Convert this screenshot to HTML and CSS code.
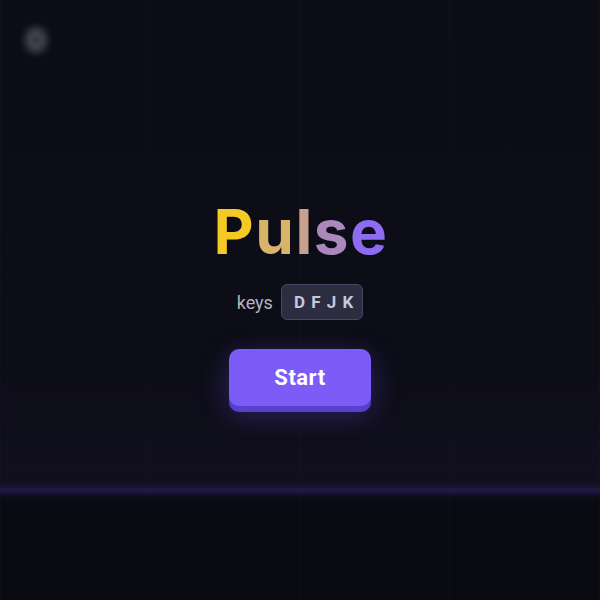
FILE: index.html
```html
<!DOCTYPE html>
<html>
<head>
<meta charset="utf-8">
<link rel="stylesheet" href="styles.css">
</head>
<body>
<div class="stage">
  <div class="lanes">
    <div class="lane"></div>
    <div class="lane"></div>
    <div class="lane"></div>
    <div class="lane"></div>
  </div>
  <div class="hitline"></div>
  <div class="score">0</div>
  <div class="menu">
    <h1 class="title"><span class="c1">P</span><span class="c2">u</span><span class="c3">l</span><span class="c4">s</span><span class="c5">e</span></h1>
    <div class="keys">
      <span class="keys-label">keys</span>
      <span class="keycap">D F J K</span>
    </div>
    <button class="start">Start</button>
  </div>
</div>
</body>
</html>
```
FILE: styles.css
```css
* { box-sizing: border-box; }
html, body { margin: 0; padding: 0; }
body {
  background: #0a0b12;
  font-family: Inter, "Noto Sans", sans-serif;
  width: 600px;
  height: 600px;
  overflow: hidden;
}
.stage {
  position: relative;
  width: 600px;
  height: 600px;
  background: linear-gradient(180deg, #0b0c16 0%, #0d0d18 60%, #110f1e 81%, #0a0b12 82.5%, #0a0b12 100%);
}
.lanes {
  position: absolute;
  inset: 0;
  display: grid;
  grid-template-columns: repeat(4, 1fr);
}
.lane {
  border-right: 1px solid rgba(60, 50, 110, 0.08);
}
.lane:first-child { border-left: 1px solid rgba(60, 50, 110, 0.08); }
.hitline {
  position: absolute;
  left: 0;
  right: 0;
  top: 488px;
  height: 5px;
  background: rgba(36, 26, 72, 0.85);
  box-shadow: 0 0 7px 2px rgba(55, 38, 110, 0.4);
}
.score {
  position: absolute;
  left: 26px;
  top: 22px;
  font-size: 30px;
  font-weight: 700;
  color: #9a9aa8;
  filter: blur(4px);
  opacity: 0.8;
}
.menu {
  position: absolute;
  inset: 0;
  display: flex;
  flex-direction: column;
  align-items: center;
  padding-top: 194px;
}
.title {
  margin: 0;
  font-size: 62px;
  font-weight: 700;
  letter-spacing: 1.5px;
  line-height: 76px;
  padding-left: 2px;
}
.c1 { color: #f5c923; }
.c2 { color: #d8b46a; }
.c3 { color: #c6a18e; }
.c4 { color: #ab88bc; }
.c5 { color: #8d6cf2; }
.keys {
  margin-top: 14px;
  display: flex;
  align-items: center;
  gap: 8px;
  padding-left: 0;
}
.keys-label {
  font-family: Roboto, Inter, sans-serif;
  font-size: 18px;
  color: #b3b3c2;
}
.keycap {
  height: 36px;
  padding: 0 8px 0 12px;
  display: flex;
  align-items: center;
  background: #2d2d42;
  border: 1px solid #46465e;
  border-radius: 6px;
  font-family: Roboto, Inter, sans-serif;
  font-size: 17px;
  font-weight: 700;
  letter-spacing: 1px;
  color: #c8c8d8;
}
.start {
  margin-top: 29px;
  width: 142px;
  height: 57px;
  border: none;
  border-radius: 10px;
  background: #7b5cf6;
  color: #ffffff;
  font-family: Roboto, Inter, sans-serif;
  font-size: 22px;
  font-weight: 700;
  letter-spacing: 0.5px;
  box-shadow: 0 6px 0 #5a3fcf, 0 8px 28px rgba(110, 80, 240, 0.35);
}
```
